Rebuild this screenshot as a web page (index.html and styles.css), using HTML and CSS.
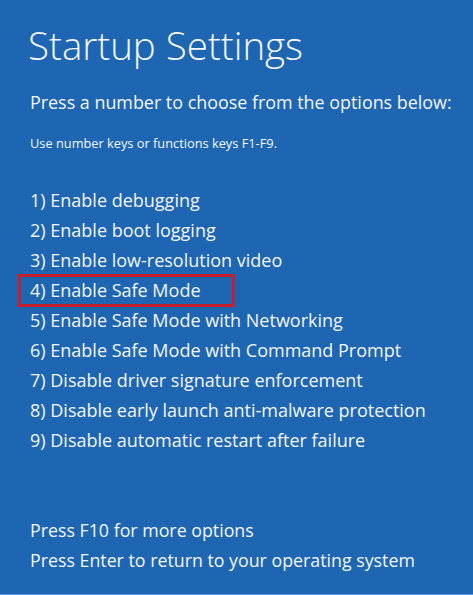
FILE: index.html
```html
<!DOCTYPE html>
<html>
<head>
<meta charset="utf-8">
<link rel="stylesheet" href="styles.css">
</head>
<body>
<main class="screen">
  <h1 class="title">Startup Settings</h1>
  <p class="prompt">Press a number to choose from the options below:</p>
  <p class="hint">Use number keys or functions keys F1-F9.</p>
  <ul class="options">
    <li>1) Enable debugging</li>
    <li>2) Enable boot logging</li>
    <li>3) Enable low-resolution video</li>
    <li class="selected">4) Enable Safe Mode</li>
    <li>5) Enable Safe Mode with Networking</li>
    <li>6) Enable Safe Mode with Command Prompt</li>
    <li>7) Disable driver signature enforcement</li>
    <li>8) Disable early launch anti-malware protection</li>
    <li>9) Disable automatic restart after failure</li>
  </ul>
  <div class="footer">
    <p>Press F10 for more options</p>
    <p>Press Enter to return to your operating system</p>
  </div>
</main>
</body>
</html>
```
FILE: styles.css
```css
html, body {
  margin: 0;
  padding: 0;
  height: 100%;
}
body {
  background: #1f66b2;
  color: #f2f6fb;
  font-family: "Open Sans", "Noto Sans", sans-serif;
}
.screen {
  box-sizing: border-box;
  height: 595px;
  padding: 18px 0 0 30px;
  border-bottom: 1px solid #5f9ee0;
}
.title {
  margin: 0 0 0 -2px;
  font-size: 38.5px;
  line-height: 54px;
  font-weight: 300;
}
.prompt {
  margin: 15px 0 0;
  font-size: 17.9px;
  line-height: 30px;
  font-weight: 400;
}
.hint {
  margin: 16px 0 0;
  font-size: 12.8px;
  line-height: 20px;
}
.options {
  list-style: none;
  margin: 32px 0 0;
  padding: 0;
  font-size: 18px;
  line-height: 30px;
}
.options .selected {
  box-sizing: border-box;
  width: 217px;
  height: 33px;
  margin: -1px 0 -2px -12px;
  padding-left: 9px;
  border: 3px solid #c41f2b;
  line-height: 27px;
}
.footer {
  margin-top: 60px;
  font-size: 17.8px;
  line-height: 30px;
}
.footer p {
  margin: 0;
}
```
